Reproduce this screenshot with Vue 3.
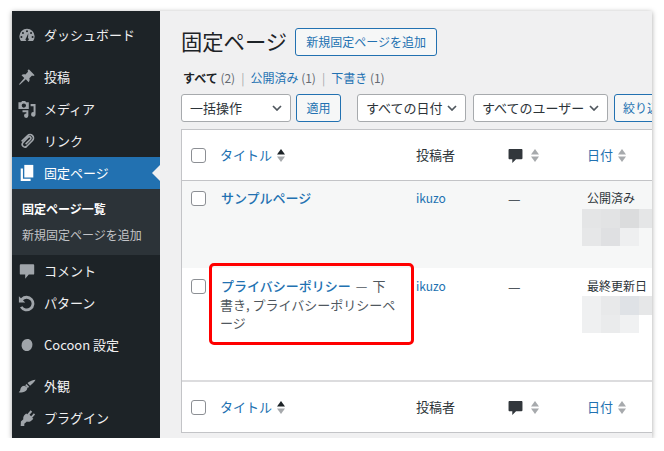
<script setup>
const menuTop = [
  { label: 'ダッシュボード', icon: 'dash', gap: true },
  { label: '投稿', icon: 'pin' },
  { label: 'メディア', icon: 'media' },
  { label: 'リンク', icon: 'link' }
]
const mosaicA = ['#e4e5e6', '#e2e3e4', '#dbdcdd', '#e5e6e7', '#e6e7e8', '#dfe0e2', '#eeeff0', 'transparent']
const mosaicB = ['#eff0f1', '#e8e9ea', '#dfe2e6', '#e6e7e8', '#eff0f1', '#eaebec', '#f0f1f2', 'transparent']
</script>

<template>
  <div class="frame">
    <aside class="sidebar">
      <a v-for="m in menuTop" :key="m.label" class="item" :class="{ spaced: m.gap }">
        <svg class="ico" viewBox="0 0 20 20">
          <path v-if="m.icon === 'dash'" fill-rule="evenodd" d="M10 3a8.500 8.500 0 0 0-8.500 8.500c0 2 .7 3.800 1.800 5.200h13.400a8.400 8.400 0 0 0 1.800-5.200A8.500 8.500 0 0 0 10 3zM10 4.800a1.100 1.100 0 1 1 0 2.200 1.100 1.100 0 0 1 0-2.200zM5.500 6.800a1.100 1.100 0 1 1 0 2.200 1.100 1.100 0 0 1 0-2.200zM14.500 6.800a1.100 1.100 0 1 1 0 2.200 1.100 1.100 0 0 1 0-2.200zM3.800 11a1.100 1.100 0 1 1 0 2.200 1.100 1.100 0 0 1 0-2.200zM16.200 11a1.100 1.100 0 1 1 0 2.200 1.100 1.100 0 0 1 0-2.200zM11.500 8l-.4 5.200a1.800 1.800 0 1 1-2 .1z" />
          <path v-else-if="m.icon === 'pin'" d="M12 1.500l6.500 6.500-1.700 1-1.200-.6-3 3c.6 1.600.3 3.200-.8 4.300l-3.100-3.100L2 18.500l-.9-.4 5.900-6.900-3.100-3.100c1.100-1.100 2.700-1.400 4.300-.8l3-3-.6-1.200z" />
          <path v-else-if="m.icon === 'media'" fill-rule="evenodd" d="M.5 2.500h3l1-1.500h3.500l1 1.500h3v7.500H.5zM6.500 3.800a2.400 2.400 0 1 0 0 4.800 2.400 2.400 0 0 0 0-4.800zM14 4.500h5.500v11.500a2.500 2.500 0 1 1-2.200-2.500V7H14zM5 11.500h6.500v6a2.400 2.400 0 1 1-2.200-2.400V13.500H5z" />
          <path v-else fill="none" stroke="#a0a5aa" stroke-width="1.800" d="M8.500 13.500l5.500-5.500a1.700 1.700 0 0 0-2.400-2.400l-6.300 6.300a3 3 0 0 0 4.200 4.200l6.600-6.600a3.800 3.800 0 0 0-5.400-5.400L4 10.500" />
        </svg>
        <span>{{ m.label }}</span>
      </a>

      <a class="item current">
        <svg class="ico" viewBox="0 0 20 20">
          <path d="M7 1h10v14H7z" />
          <path d="M3 5h2.500v11.500H14V19H3z" />
        </svg>
        <span>固定ページ</span>
      </a>
      <div class="submenu">
        <a class="sub strong">固定ページ一覧</a>
        <a class="sub">新規固定ページを追加</a>
      </div>

      <a class="item">
        <svg class="ico" viewBox="0 0 20 20"><path d="M3 2.500h14a1 1 0 0 1 1 1v9.500a1 1 0 0 1-1 1h-5l-4 4.500V14H3a1 1 0 0 1-1-1V3.500a1 1 0 0 1 1-1z" /></svg>
        <span>コメント</span>
      </a>
      <a class="item">
        <svg class="ico" viewBox="0 0 20 20">
          <path d="M1 2.500v7h7L5.500 7a5.500 5.500 0 1 1-.6 6.500l-2.700 1.600A8.600 8.600 0 1 0 3.300 4.800z" />
        </svg>
        <span>パターン</span>
      </a>
      <a class="item cocoon">
        <svg class="ico" viewBox="0 0 20 20"><ellipse cx="10" cy="10" rx="6" ry="6.800" transform="rotate(15 10 10)" /></svg>
        <span>Cocoon 設定</span>
      </a>
      <a class="item">
        <svg class="ico" viewBox="0 0 20 20">
          <path d="M19.500 3c-2.800.2-6.500 1.500-9 3.800l2.900 2.900C16 7.500 18.500 5 19.500 3zM9.500 7.800L8 9.200l3 3 1.300-1.500zM7.200 9.800C4.300 9.800 2.800 12 2.600 14c-.1 1.200-.6 2-1.800 3 3.700.9 7.300-.2 8.800-2.500.8-1.200.8-2.200.5-3z" />
        </svg>
        <span>外観</span>
      </a>
      <a class="item">
        <svg class="ico" viewBox="0 0 20 20">
          <path d="M14 1.500l1.800 1.500-3 3.500 1.800 1.600 3-3.500L19 6l-3.200 3.800 1.200 1-1.300 1.300c-1.800 1.800-4.100 2.500-5.800 1.800L7 16.500V19H3l.2-5 2.700-2.500c-.4-1.800.3-3.800 1.900-5.300l1.300-1.300 1.200 1z" />
        </svg>
        <span>プラグイン</span>
      </a>
    </aside>

    <main class="main">
      <div class="heading">
        <h1>固定ページ</h1>
        <a class="btn add">新規固定ページを追加</a>
      </div>

      <ul class="tabs">
        <li><b>すべて</b> <i>(2)</i></li>
        <li class="sep">|</li>
        <li><a>公開済み</a> <i>(1)</i></li>
        <li class="sep">|</li>
        <li><a>下書き</a> <i>(1)</i></li>
      </ul>

      <div class="filters">
        <div class="select w-bulk">一括操作<svg class="chev" viewBox="0 0 10 6"><path d="M1 1l4 4 4-4" /></svg></div>
        <a class="btn apply">適用</a>
        <div class="select w-date">すべての日付<svg class="chev" viewBox="0 0 10 6"><path d="M1 1l4 4 4-4" /></svg></div>
        <div class="select w-user">すべてのユーザー<svg class="chev" viewBox="0 0 10 6"><path d="M1 1l4 4 4-4" /></svg></div>
        <a class="btn narrow">絞り込み</a>
      </div>

      <div class="table">
        <div class="row head">
          <div class="cell"><span class="cb"></span></div>
          <div class="cell link"><span class="lbl">タイトル</span>
            <svg class="sort" viewBox="0 0 8 13"><path class="dark" d="M4 0l4 5.500H0z" /><path d="M4 13L0 7.500h8z" /></svg>
          </div>
          <div class="cell"><span class="lbl">投稿者</span></div>
          <div class="cell">
            <svg class="bubble" viewBox="0 0 14 14"><path d="M1 1h12a1 1 0 0 1 .5 1v7.500a1 1 0 0 1-1 1H7.500L4 14v-3.500H1a1 1 0 0 1-.5-1V2A1 1 0 0 1 1 1z" /></svg>
            <svg class="sort gap" viewBox="0 0 8 13"><path d="M4 0l4 5.500H0z" /><path d="M4 13L0 7.500h8z" /></svg>
          </div>
          <div class="cell link"><span class="lbl">日付</span>
            <svg class="sort" viewBox="0 0 8 13"><path d="M4 0l4 5.500H0z" /><path d="M4 13L0 7.500h8z" /></svg>
          </div>
        </div>

        <div class="row body alt">
          <div class="cell"><span class="cb"></span></div>
          <div class="cell title"><a class="page-link">サンプルページ</a></div>
          <div class="cell small"><a class="author">ikuzo</a></div>
          <div class="cell small dash">—</div>
          <div class="cell small">
            <div>公開済み</div>
            <div class="mosaic"><span v-for="(c, i) in mosaicA" :key="i" :style="{ background: c }"></span></div>
          </div>
        </div>

        <div class="row body second">
          <div class="cell"><span class="cb"></span></div>
          <div class="cell title">
            <a class="page-link">プライバシーポリシー</a><span class="emdash">—</span>下書き, プライバシーポリシーページ
            <span class="mark"></span>
          </div>
          <div class="cell small"><a class="author">ikuzo</a></div>
          <div class="cell small dash">—</div>
          <div class="cell small">
            <div>最終更新日</div>
            <div class="mosaic"><span v-for="(c, i) in mosaicB" :key="i" :style="{ background: c }"></span></div>
          </div>
        </div>

        <div class="row head foot">
          <div class="cell"><span class="cb"></span></div>
          <div class="cell link"><span class="lbl">タイトル</span>
            <svg class="sort" viewBox="0 0 8 13"><path class="dark" d="M4 0l4 5.500H0z" /><path d="M4 13L0 7.500h8z" /></svg>
          </div>
          <div class="cell"><span class="lbl">投稿者</span></div>
          <div class="cell">
            <svg class="bubble" viewBox="0 0 14 14"><path d="M1 1h12a1 1 0 0 1 .5 1v7.500a1 1 0 0 1-1 1H7.500L4 14v-3.500H1a1 1 0 0 1-.5-1V2A1 1 0 0 1 1 1z" /></svg>
            <svg class="sort gap" viewBox="0 0 8 13"><path d="M4 0l4 5.500H0z" /><path d="M4 13L0 7.500h8z" /></svg>
          </div>
          <div class="cell link"><span class="lbl">日付</span>
            <svg class="sort" viewBox="0 0 8 13"><path d="M4 0l4 5.500H0z" /><path d="M4 13L0 7.500h8z" /></svg>
          </div>
        </div>
      </div>
    </main>
  </div>
</template>

<style>
html, body {
  margin: 0;
  background: #fff;
}
</style>

<style scoped>
.frame {
  display: flex;
  width: 640px;
  height: 427px;
  margin: 11px 12px 0;
  background: #f0f0f1;
  box-shadow: 0 1px 5px rgba(0, 0, 0, 0.35);
  overflow: hidden;
  font-family: "Noto Sans CJK JP", "Noto Sans", sans-serif;
  font-size: 13px;
  color: #3c434a;
}

/* sidebar */
.sidebar {
  flex: 0 0 148px;
  padding-top: 8px;
  background: #1d2327;
  box-sizing: border-box;
}
.item {
  display: flex;
  align-items: center;
  height: 32px;
  color: #f0f0f1;
}
.item span { margin-top: -2px; }
.item.spaced { margin-bottom: 10px; }
.item.cocoon { margin: 10px 0 9px; }
.ico {
  width: 18px;
  height: 18px;
  margin: 0 8px 0 6px;
  flex: none;
  fill: #a0a5aa;
}
.item.current {
  position: relative;
  background: #2271b1;
  color: #fff;
}
.item.current .ico { fill: #fff; }
.item.current::after {
  content: "";
  position: absolute;
  right: 0;
  top: 8px;
  border: 8px solid transparent;
  border-right-color: #f0f0f1;
  border-left-width: 0;
}
.submenu {
  display: flex;
  flex-direction: column;
  height: 66px;
  padding: 7px 0 0 10px;
  box-sizing: border-box;
  background: #2c3338;
  font-size: 12px;
  color: #c3c4c7;
}
.sub {
  height: 26px;
  line-height: 26px;
}
.sub.strong {
  font-weight: 700;
  color: #fff;
}

/* main */
.main {
  flex: 1;
  min-width: 0;
  padding: 17px 0 0 21px;
  overflow: hidden;
}
.heading {
  display: flex;
  align-items: center;
  gap: 8px;
  height: 28px;
}
h1 {
  margin: 0;
  padding-bottom: 2px;
  font-size: 21.300px;
  font-weight: 400;
  color: #1d2327;
  line-height: 26px;
}
.btn {
  display: flex;
  align-items: center;
  justify-content: center;
  box-sizing: border-box;
  flex: none;
  height: 28px;
  padding-bottom: 2px;
  border: 1px solid #2271b1;
  border-radius: 3px;
  background: #f6f7f7;
  color: #2271b1;
  font-size: 12px;
}
.add { width: 142px; }
.apply { width: 45px; margin-left: 5px; }
.narrow { width: 66px; margin-left: 6px; }

.tabs {
  display: flex;
  gap: 6px;
  margin: 13px 0 0 2px;
  padding: 0;
  list-style: none;
  height: 18px;
  line-height: 18px;
  font-size: 12px;
}
.tabs b { color: #1d2327; }
.tabs a { color: #2271b1; }
.tabs i { font-style: normal; color: #646970; font-size: 12px; }
.sep { color: #a7aaad; }

.filters {
  display: flex;
  margin-top: 7px;
  height: 28px;
}
.select {
  display: flex;
  align-items: center;
  justify-content: space-between;
  box-sizing: border-box;
  flex: none;
  height: 28px;
  padding: 0 8px 2px 8px;
  background: #fff;
  border: 1px solid #a7aaad;
  border-radius: 3px;
  color: #2c3338;
  font-size: 13px;
}
.w-bulk { width: 110px; }
.w-date { width: 109px; margin-left: 16px; }
.w-user { width: 135px; margin-left: 7px; }
.chev {
  width: 10px;
  height: 6px;
  margin-top: 2px;
  fill: none;
  stroke: #50575e;
  stroke-width: 1.7;
}

/* table */
.table {
  width: 480px;
  margin-top: 7px;
  background: #fff;
  border: 1px solid #c3c4c7;
  border-right: 0;
  box-sizing: border-box;
}
.row {
  display: grid;
  grid-template-columns: 38px 196px 92px 79px 1fr;
  box-sizing: border-box;
}
.cell {
  display: block;
  min-width: 0;
  color: #2c3338;
}
.head {
  height: 51px;
  align-items: center;
  border-bottom: 1px solid #c3c4c7;
}
.foot {
  height: 52px;
  border-bottom: 0;
  border-top: 2px solid #dcdcde;
}
.head .cell {
  display: flex;
  align-items: center;
}
.head .link { color: #2271b1; }
.lbl { margin-top: -2px; }
.cb {
  display: block;
  box-sizing: border-box;
  width: 15px;
  height: 15px;
  margin-left: 9px;
  background: #fff;
  border: 1px solid #8c8f94;
  border-radius: 3px;
}
.body { padding-top: 9px; }
.body .cb { margin-top: 2px; }
.alt { height: 87px; background: #f6f7f7; padding-top: 8px; }
.second { height: 112px; }
.title {
  position: relative;
  width: 177px;
  line-height: 18.500px;
  font-size: 13px;
  color: #50575e;
}
.page-link {
  font-weight: 500;
  color: #2271b1;
  margin-left: 1px;
}
.emdash { margin: 0 5px; }
.small {
  font-size: 12px;
  line-height: 18px;
}
.author { color: #2271b1; }
.dash { color: #50575e; font-size: 14px; }
.mosaic {
  display: grid;
  grid-template-columns: repeat(4, 19px);
  grid-auto-rows: 18.500px;
  margin: 1px 0 0 -5px;
}
.alt .mosaic { margin-top: 2px; }
.mark {
  position: absolute;
  left: -11px;
  top: -14px;
  width: 205px;
  height: 82px;
  box-sizing: border-box;
  border: 3px solid #f00;
  border-radius: 5px;
  pointer-events: none;
}
.sort {
  width: 8px;
  height: 13px;
  margin-left: 5px;
  fill: #a7aaad;
}
.sort.gap { margin-left: 8px; }
.sort .dark { fill: #1d2327; }
.bubble {
  width: 15px;
  height: 15px;
  fill: #32373c;
}
</style>
